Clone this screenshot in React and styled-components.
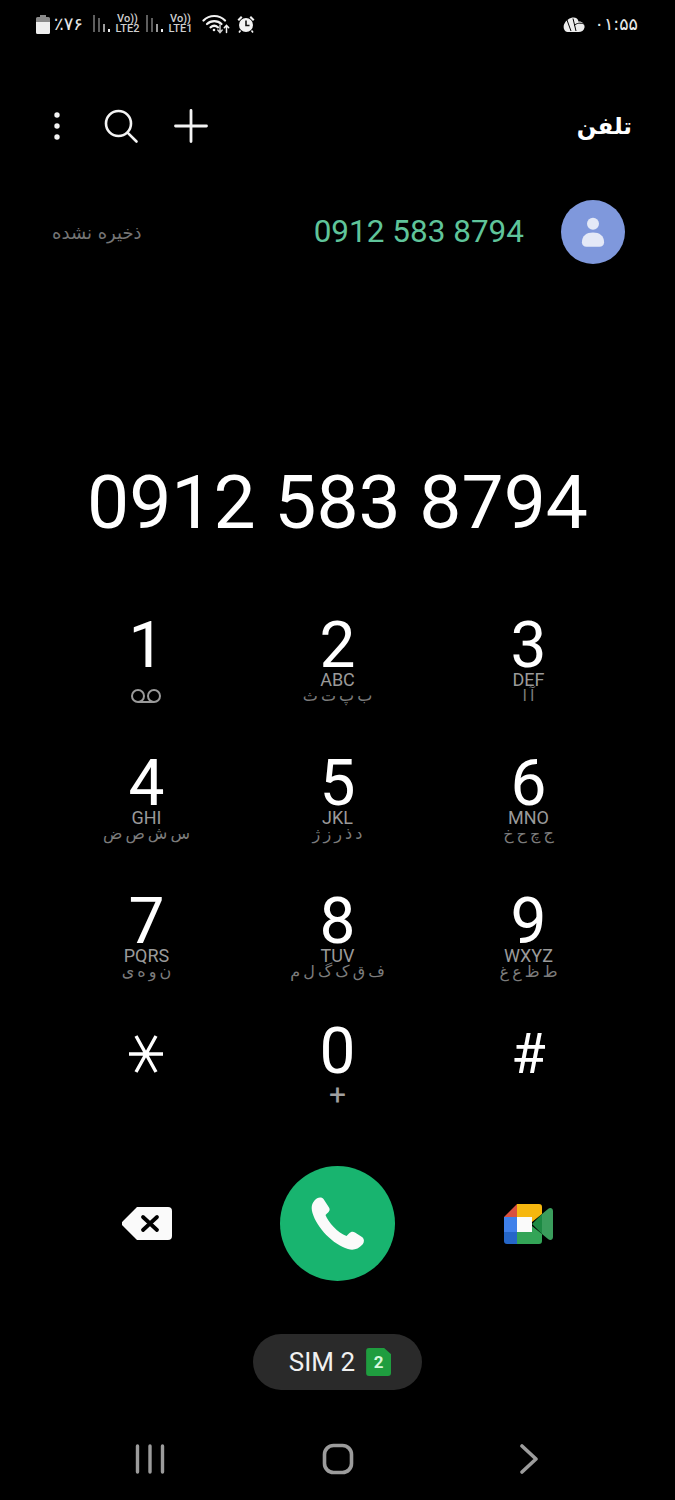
import React from 'react';
import styled, { createGlobalStyle } from 'styled-components';

const GlobalStyle = createGlobalStyle`
  html, body {
    margin: 0;
    padding: 0;
    background: #000;
  }
  * {
    box-sizing: border-box;
  }
`;

const FONT = `Roboto, "DejaVu Sans", sans-serif`;
const PERSIAN = `"DejaVu Sans", "Noto Sans", sans-serif`;

const Page = styled.div`
  width: 675px;
  height: 1500px;
  background: #000;
  color: #fff;
  font-family: ${FONT};
  display: flex;
  flex-direction: column;
  overflow: hidden;
`;

/* status bar */
const StatusBar = styled.div`
  height: 48px;
  padding: 0 37px 0 36px;
  display: flex;
  align-items: center;
  justify-content: space-between;
`;

const Cluster = styled.div`
  display: flex;
  align-items: center;
  gap: ${(p) => p.$gap || 5}px;
`;

const BatteryPct = styled.span`
  width: 30px;
  font-family: ${PERSIAN};
  font-size: 18px;
  line-height: 18px;
  color: #e8e8e8;
  white-space: nowrap;
`;

const SimStack = styled.div`
  width: 25px;
  display: flex;
  flex-direction: column;
  align-items: center;
  font-size: 11px;
  font-weight: 500;
  line-height: 10px;
  color: #cfcfcf;
`;

const Clock = styled.span`
  font-family: ${PERSIAN};
  font-size: 17.5px;
  line-height: 20px;
  color: #e8e8e8;
`;

/* app header */
const Header = styled.div`
  height: 60px;
  margin-top: 48px;
  padding: 0 43px 0 51px;
  display: flex;
  align-items: center;
  justify-content: space-between;
`;

const HeaderTools = styled.div`
  display: flex;
  align-items: center;
  gap: 32px;
`;

const DotsIcon = styled.svg`
  margin-right: 7px;
`;

const Title = styled.h1`
  margin: 0;
  font-family: ${PERSIAN};
  font-size: 23px;
  font-weight: 700;
  line-height: 40px;
  color: #fff;
`;

/* recent call row */
const RecentRow = styled.div`
  height: 64px;
  margin-top: 44px;
  padding: 0 50px 0 52px;
  display: flex;
  align-items: center;
  justify-content: space-between;
`;

const Unsaved = styled.span`
  font-family: ${PERSIAN};
  font-size: 18px;
  letter-spacing: 2.4px;
  color: #757575;
`;

const RecentRight = styled.div`
  display: flex;
  align-items: center;
  gap: 37px;
`;

const RecentNumber = styled.span`
  font-size: 31.5px;
  line-height: 42px;
  color: #5fc49a;
`;

const Avatar = styled.div`
  width: 64px;
  height: 64px;
  border-radius: 50%;
  background: #7f98dc;
  display: flex;
  align-items: center;
  justify-content: center;
`;

/* dialed number */
const Dialed = styled.div`
  height: 100px;
  margin-top: 188px;
  font-size: 75px;
  line-height: 100px;
  text-align: center;
  white-space: nowrap;
`;

/* keypad */
const ThreeCols = styled.div`
  width: 573px;
  margin: 0 auto;
  display: grid;
  grid-template-columns: repeat(3, 191px);
  justify-items: center;
  align-items: center;
`;

const Keypad = styled(ThreeCols)`
  margin-top: 48px;
  grid-auto-rows: 138px;
  align-items: start;
`;

const Key = styled.div`
  width: 100%;
  padding-top: ${(p) => p.$top}px;
  display: flex;
  flex-direction: column;
  align-items: center;
`;

const Digit = styled.div`
  height: 60px;
  font-size: ${(p) => p.$size || 64}px;
  font-weight: 400;
  line-height: 60px;
  color: #fff;
`;

const StarBox = styled.div`
  height: 60px;
  margin-right: 2px;
  display: flex;
  align-items: center;
`;

const Letters = styled.div`
  height: 18px;
  margin-top: -5px;
  font-size: 18px;
  line-height: 18px;
  color: #9a9a9a;
`;

const Persian = styled.div`
  height: 16px;
  margin-top: -1px;
  font-family: ${PERSIAN};
  font-size: 16px;
  line-height: 16px;
  letter-spacing: 5.5px;
  word-spacing: -2px;
  color: #7c7c7c;
  white-space: nowrap;
`;

const Plus = styled.div`
  height: 30px;
  margin-top: -2px;
  font-size: 30px;
  line-height: 30px;
  color: #a0a0a0;
`;

const VoicemailBox = styled.div`
  height: 18px;
  margin-top: 12px;
  margin-right: 1px;
`;

/* call actions */
const Actions = styled(ThreeCols)`
  margin-top: 14px;
  height: 115px;
`;

const CallButton = styled.div`
  width: 115px;
  height: 115px;
  border-radius: 50%;
  background: #18b46f;
  display: flex;
  align-items: center;
  justify-content: center;
`;

/* sim selector */
const SimPill = styled.div`
  align-self: center;
  width: 169px;
  height: 56px;
  margin-top: 53px;
  padding-left: 5px;
  border-radius: 28px;
  background: #2a2a2a;
  display: flex;
  align-items: center;
  justify-content: center;
  gap: 11px;
  font-size: 26px;
  color: #f0f0f0;
`;

const SimBadge = styled.span`
  width: 25px;
  height: 28px;
  border-radius: 3px;
  background: #1f9d3f;
  clip-path: polygon(0 0, 72% 0, 100% 22%, 100% 100%, 0 100%);
  display: flex;
  align-items: center;
  justify-content: center;
  font-size: 17px;
  font-weight: 700;
  color: #d6f8dc;
`;

/* navigation bar */
const NavBar = styled(ThreeCols)`
  margin-top: 49px;
  height: 40px;
`;

const RecentsIcon = styled.svg`
  margin-left: 6px;
`;

const Signal = () => (
  <svg width="17" height="18" viewBox="0 0 17 18">
    <rect x="0" y="0" width="2" height="17" fill="#5e5e5e" />
    <rect x="5" y="3" width="2" height="14" fill="#5e5e5e" />
    <rect x="10" y="9" width="2" height="8" fill="#9a9a9a" />
    <rect x="15" y="14" width="2" height="3" fill="#eeeeee" />
  </svg>
);

const Sim = ({ line }) => (
  <SimStack>
    <span>Vo))</span>
    <span>{line}</span>
  </SimStack>
);

const Battery = () => (
  <svg width="14" height="19" viewBox="0 0 14 19">
    <rect x="4" y="0" width="6" height="2" fill="#8a8a8a" />
    <path d="M1.5 2H12.500A1.500 1.500 0 0 1 14 3.500V7H0V3.500A1.500 1.500 0 0 1 1.500 2Z" fill="#8a8a8a" />
    <path d="M0 7H14V17.500A1.500 1.500 0 0 1 12.500 19H1.500A1.500 1.500 0 0 1 0 17.500Z" fill="#eeeeee" />
  </svg>
);

const Wifi = () => (
  <svg width="28" height="20" viewBox="0 0 28 20" fill="none" stroke="#f2f2f2" strokeLinecap="round">
    <path d="M1.500 6.500C7.500 0.500 17 0.500 23 6.500" strokeWidth="2.200" />
    <path d="M5 10C9 6.200 15.500 6.200 19.500 10" strokeWidth="2.200" />
    <path d="M8.500 13.300C10.800 11.400 13.700 11.400 16 13.300" strokeWidth="2.200" />
    <circle cx="12" cy="16" r="1.300" fill="#f2f2f2" stroke="none" />
    <path d="M18 11V18M15.800 16L18 18.500L20.200 16" strokeWidth="1.500" stroke="#cfcfcf" />
    <path d="M24.500 18.500V11.500M22.300 13.800L24.500 11.300L26.700 13.800" strokeWidth="1.500" />
  </svg>
);

const Alarm = () => (
  <svg width="18" height="18" viewBox="0 0 18 18">
    <circle cx="9" cy="10" r="7" fill="#f2f2f2" />
    <path d="M0.500 4.500L4 1L5.500 2.500L2 6ZM17.500 4.500L14 1L12.500 2.500L16 6Z" fill="#f2f2f2" />
    <path d="M9 5.500V10.500H12.500" fill="none" stroke="#111" strokeWidth="1.600" />
    <path d="M3.500 15.500L2 17.500M14.500 15.500L16 17.500" stroke="#f2f2f2" strokeWidth="1.600" />
  </svg>
);

const CloudMark = () => (
  <svg width="22" height="15" viewBox="0 0 22 15">
    <path d="M1 12C-0.500 8 3 2.500 8 1C12 -0.300 15 1.500 15.500 4.500C19 4 22 7 21.500 10.500C21 13.500 18.500 15 15.500 15H4.500C3 15 1.700 13.800 1 12Z" fill="#ededed" />
    <path d="M4 3L8 14M10 1.500L13 14M11 8.500C14 6 17 5.500 21 7" fill="none" stroke="#000" strokeWidth="1" />
  </svg>
);

const Dots = () => (
  <DotsIcon width="12" height="30" viewBox="0 0 12 30">
    <circle cx="6" cy="4" r="2.700" fill="#f4f4f4" />
    <circle cx="6" cy="15" r="2.700" fill="#f4f4f4" />
    <circle cx="6" cy="26" r="2.700" fill="#f4f4f4" />
  </DotsIcon>
);

const Search = () => (
  <svg width="38" height="38" viewBox="0 0 38 38" fill="none" stroke="#f4f4f4" strokeWidth="2.600" strokeLinecap="round">
    <circle cx="16.500" cy="16.500" r="12.500" />
    <path d="M25.800 25.800L34.500 34.500" />
  </svg>
);

const PlusIcon = () => (
  <svg width="38" height="38" viewBox="0 0 38 38" fill="none" stroke="#f4f4f4" strokeWidth="2.800" strokeLinecap="round">
    <path d="M19 3.500V34.500M3.500 19H34.500" />
  </svg>
);

const Person = () => (
  <svg width="24" height="34" viewBox="0 0 26 34">
    <circle cx="13" cy="8" r="6.500" fill="#e4e9f7" />
    <path d="M1 28C1 21 6 17.500 13 17.500C20 17.500 25 21 25 28C25 31 23 33 20 33H6C3 33 1 31 1 28Z" fill="#e4e9f7" />
  </svg>
);

const Voicemail = () => (
  <svg width="32" height="14" viewBox="0 0 32 14" fill="none" stroke="#9a9a9a" strokeWidth="2">
    <circle cx="8" cy="7" r="6" />
    <circle cx="24" cy="7" r="6" />
    <path d="M8 13H24" />
  </svg>
);

const Star = () => (
  <svg width="34" height="40" viewBox="0 0 34 40" fill="none" stroke="#fff" strokeWidth="3.400">
    <path d="M0 20H34M7 2L27 38M27 2L7 38" />
  </svg>
);

const Backspace = () => (
  <svg width="50" height="33" viewBox="0 0 50 33">
    <path d="M15 0H46A4 4 0 0 1 50 4V29A4 4 0 0 1 46 33H15L1 19A3.500 3.500 0 0 1 1 14Z" fill="#fafafa" />
    <path d="M21 10L35 23M35 10L21 23" stroke="#000" strokeWidth="3.800" strokeLinecap="round" />
  </svg>
);

const Handset = () => (
  <svg width="54" height="54" viewBox="0 0 54 54">
    <path
      d="M3.500 3.500C6 0.500 10 -0.500 12.500 2L18 10.500C19.300 12.800 18.500 14.500 16 16.500L14.500 18C17 25 27 36 35.500 39L38 36.500C40 34.500 42 34.300 44 35.500L51 40C53.500 42 53.500 45 51.500 47.500C47 52.500 42 53.500 37 52C22 47.500 6 31 1.500 16C0 11 0.500 7 3.500 3.500Z"
      fill="#fafafa"
    />
  </svg>
);

const Meet = () => (
  <svg width="49" height="40" viewBox="0 0 49 40">
    <path d="M13 0V13H0Z" fill="#d9503f" />
    <path d="M13 0H35A3 3 0 0 1 38 3V10L28 18V13H13Z" fill="#f6b70f" />
    <rect x="0" y="13" width="13" height="15" fill="#3f80ea" />
    <path d="M0 28H13V40H3A3 3 0 0 1 0 37Z" fill="#2566c8" />
    <path d="M13 28H28V22L38 30V37A3 3 0 0 1 35 40H13Z" fill="#33a457" />
    <rect x="13" y="13" width="15" height="15" fill="#fafafa" />
    <path d="M28 20L38 10V30Z" fill="#1c8a43" />
    <path d="M38 10L44 5C46 3 49 4 49 7V33C49 36 46 37 44 35L38 30Z" fill="#3a9d5c" />
  </svg>
);

const Recents = () => (
  <RecentsIcon width="30" height="30" viewBox="0 0 30 30" stroke="#9c9c9c" strokeWidth="3.400" strokeLinecap="round">
    <path d="M2.500 2V28M15 2V28M27.500 2V28" />
  </RecentsIcon>
);

const Home = () => (
  <svg width="32" height="32" viewBox="0 0 32 32" fill="none" stroke="#9c9c9c" strokeWidth="3.600">
    <rect x="2.500" y="2.500" width="27" height="27" rx="9" />
  </svg>
);

const Back = () => (
  <svg width="20" height="30" viewBox="0 0 20 30" fill="none" stroke="#9c9c9c" strokeWidth="3.600" strokeLinecap="round" strokeLinejoin="round">
    <path d="M3 2L17 15L3 28" />
  </svg>
);

const KEYS = [
  { digit: '1', voicemail: true },
  { digit: '2', letters: 'ABC', persian: 'ب پ ت ث' },
  { digit: '3', letters: 'DEF', persian: 'آ ا' },
  { digit: '4', letters: 'GHI', persian: 'س ش ص ض' },
  { digit: '5', letters: 'JKL', persian: 'د ذ ر ز ژ' },
  { digit: '6', letters: 'MNO', persian: 'ج چ ح خ' },
  { digit: '7', letters: 'PQRS', persian: 'ن و ه ی' },
  { digit: '8', letters: 'TUV', persian: 'ف ق ک گ ل م' },
  { digit: '9', letters: 'WXYZ', persian: 'ط ظ ع غ' },
  { star: true, top: 10 },
  { digit: '0', plus: true, top: 8 },
  { digit: '#', size: 56, top: 10 },
];

function DialKey({ item }) {
  return (
    <Key $top={item.top || 16}>
      {item.star ? (
        <StarBox>
          <Star />
        </StarBox>
      ) : (
        <Digit $size={item.size}>{item.digit}</Digit>
      )}
      {item.voicemail && (
        <VoicemailBox>
          <Voicemail />
        </VoicemailBox>
      )}
      {item.letters && <Letters>{item.letters}</Letters>}
      {item.persian && <Persian dir="rtl">{item.persian}</Persian>}
      {item.plus && <Plus>+</Plus>}
    </Key>
  );
}

export default function App() {
  return (
    <Page>
      <GlobalStyle />
      <StatusBar>
        <Cluster $gap={9}>
          <Cluster $gap={4}>
            <Battery />
            <BatteryPct>٪۷۶</BatteryPct>
          </Cluster>
          <Cluster $gap={6}>
            <Cluster>
              <Signal />
              <Sim line="LTE2" />
            </Cluster>
            <Cluster>
              <Signal />
              <Sim line="LTE1" />
            </Cluster>
          </Cluster>
          <Cluster $gap={7}>
            <Wifi />
            <Alarm />
          </Cluster>
        </Cluster>
        <Cluster $gap={10}>
          <CloudMark />
          <Clock>۰۱:۵۵</Clock>
        </Cluster>
      </StatusBar>

      <Header>
        <HeaderTools>
          <Dots />
          <Search />
          <PlusIcon />
        </HeaderTools>
        <Title>تلفن</Title>
      </Header>

      <RecentRow>
        <Unsaved>ذخیره نشده</Unsaved>
        <RecentRight>
          <RecentNumber>0912 583 8794</RecentNumber>
          <Avatar>
            <Person />
          </Avatar>
        </RecentRight>
      </RecentRow>

      <Dialed>0912 583 8794</Dialed>

      <Keypad>
        {KEYS.map((item, i) => (
          <DialKey key={i} item={item} />
        ))}
      </Keypad>

      <Actions>
        <Backspace />
        <CallButton>
          <Handset />
        </CallButton>
        <Meet />
      </Actions>

      <SimPill>
        SIM 2
        <SimBadge>2</SimBadge>
      </SimPill>

      <NavBar>
        <Recents />
        <Home />
        <Back />
      </NavBar>
    </Page>
  );
}
